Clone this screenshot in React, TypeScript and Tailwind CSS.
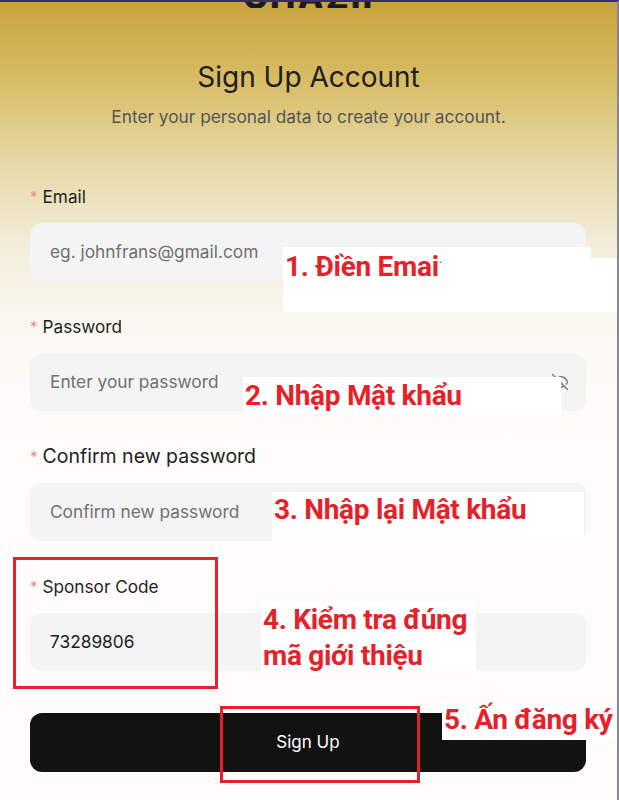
import { EyeOff } from "lucide-react"

const fields = [
  { label: "Email", placeholder: "eg. johnfrans@gmail.com" },
  { label: "Password", placeholder: "Enter your password", eye: true },
  { label: "Confirm new password", placeholder: "Confirm new password", big: true },
  { label: "Sponsor Code", value: "73289806" },
]

function Note({ className, children }: { className: string; children: React.ReactNode }) {
  return (
    <div
      className={`absolute bg-white text-[#e62129] font-bold text-[28px] leading-[36px] tracking-[-0.3px] ${className}`}
      style={{ fontFamily: "Roboto, 'Noto Sans', sans-serif" }}
    >
      {children}
    </div>
  )
}

export default function App() {
  return (
    <div
      className="relative w-[619px] h-[800px] overflow-hidden border-t-2 border-[#3b2a6b] border-r-2 border-r-[#8a8590] bg-[linear-gradient(to_bottom,#c8a33c_0%,#d8bd66_10%,#e6d7a6_20%,#f3ecd8_30%,#fbf9f3_42%,#fdfcfa_55%,#fdfcfa_100%)]"
      style={{ fontFamily: "Inter, 'Noto Sans', sans-serif" }}
    >
      {/* logo, cut off at top */}
      <div className="h-[6px] overflow-hidden flex justify-center">
        <div className="text-[34px] font-extrabold leading-none text-[#1a1a1a] -mt-[22px] tracking-[2px]">CHAZII</div>
      </div>

      <h1 className="mt-[51px] text-center text-[28px] leading-[36px] text-[#1c1c1c]">Sign Up Account</h1>
      <p className="mt-[10px] text-center text-[17.3px] leading-[24px] text-[#555]">
        Enter your personal data to create your account.
      </p>

      <div className="mt-[55px] ml-[30px] w-[556px] flex flex-col">
        {fields.map((f) => (
          <div key={f.label} className="h-[130px] pt-[1px]">
            <div className={`flex items-center h-[24px] text-[#1f1f1f] ${f.big ? "text-[19.5px]" : "text-[17.2px]"}`}>
              <span className="text-[#f08a8a] text-[15px] mr-[5px]">*</span>
              {f.label}
            </div>
            <div className="mt-[14px] h-[58px] rounded-[12px] bg-[#f4f4f5] flex items-center pl-[20px] pr-[17px] text-[17.3px]">
              {f.value ? (
                <span className="text-[#222]">{f.value}</span>
              ) : (
                <span className="text-[#707070]">{f.placeholder}</span>
              )}
              {f.eye && <EyeOff className="ml-auto w-[18px] h-[18px] text-[#777]" strokeWidth={1.8} />}
            </div>
          </div>
        ))}
        <button className="mt-[9px] h-[59px] rounded-[12px] bg-[#121212] text-white text-[17px]">Sign Up</button>
      </div>

      {/* annotations */}
      <Note className="left-[283px] top-[245px] w-[308px] h-[65px] pl-[2px] pt-[2px]">
        1. Điền Emai<span className="font-normal text-[14px] align-top">˙</span>
      </Note>
      <div className="absolute left-[591px] top-[256px] w-[28px] h-[54px] bg-white" />
      <Note className="left-[243px] top-[375px] w-[318px] h-[38px] pl-[2px] pt-[1px]">2. Nhập Mật khẩu</Note>
      <Note className="left-[272px] top-[490px] w-[312px] h-[53px] pl-[2px]">3. Nhập lại Mật khẩu</Note>
      <Note className="left-[261px] top-[600px] w-[215px] h-[72px] pl-[2px]">
        <div>4. Kiểm tra đúng</div>
        <div>mã giới thiệu</div>
      </Note>
      <Note className="left-[442px] top-[700px] w-[177px] h-[38px] pl-[2px]">5. Ấn đăng ký</Note>

      <div className="absolute left-[13px] top-[555px] w-[205px] h-[132px] border-[3px] border-[#e62129]" />
      <div className="absolute left-[220px] top-[704px] w-[200px] h-[77px] border-[3px] border-[#e62129]" />
    </div>
  )
}
